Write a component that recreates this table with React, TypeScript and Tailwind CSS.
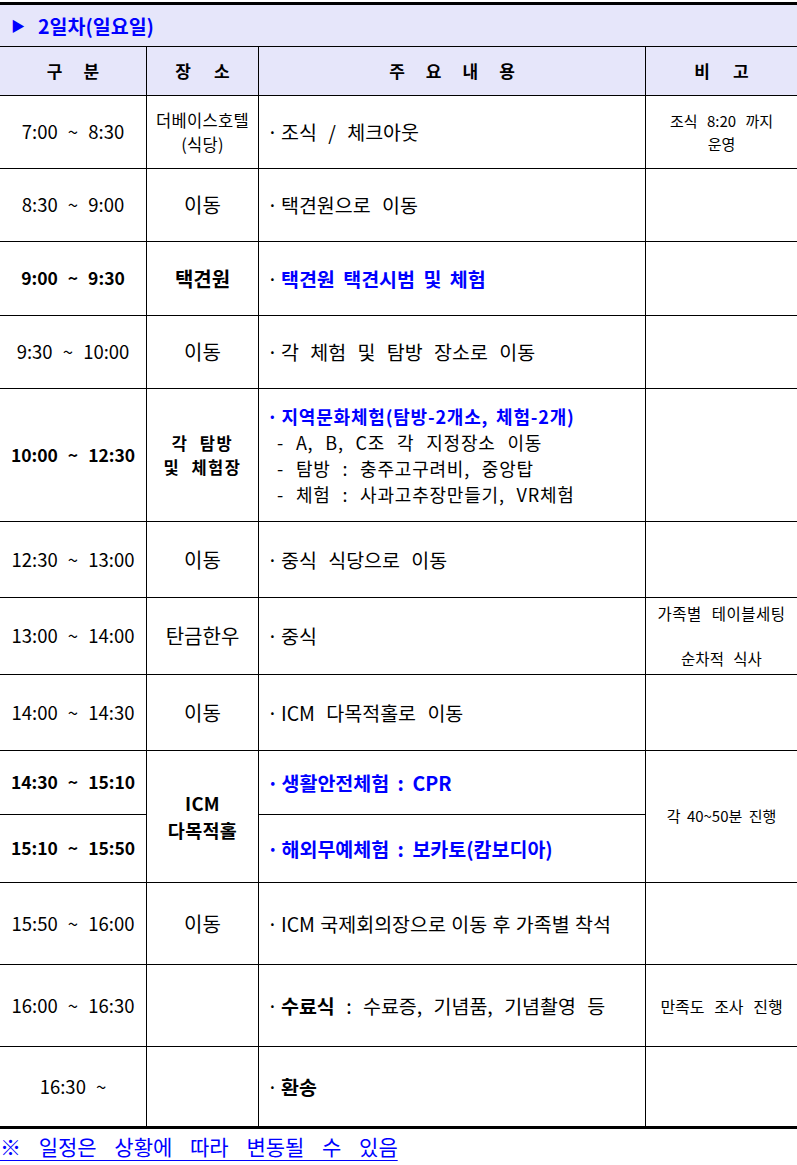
import React from 'react';

type Row = {
  time: string;
  timeBold?: boolean;
  place?: React.ReactNode;
  content: React.ReactNode;
  note?: React.ReactNode;
  noteSpan?: boolean;
  placeSpan?: boolean;
  skipPlace?: boolean;
  skipNote?: boolean;
};

const blue = 'text-[#0000ff]';

function Dot({ className = '' }: { className?: string }) {
  return <span className={`mr-[3px] ${className}`}>·</span>;
}

const rows: Row[] = [
  {
    time: '7:00 ~ 8:30',
    place: (
      <div className="text-[16.5px] leading-[24px] tracking-[0.3px]">
        <div>더베이스호텔</div>
        <div>(식당)</div>
      </div>
    ),
    content: <span><Dot />조식 / 체크아웃</span>,
    note: (
      <div className="text-[15px] leading-[23px]">
        <div>조식 8:20 까지</div>
        <div>운영</div>
      </div>
    ),
  },
  { time: '8:30 ~ 9:00', place: '이동', content: <span><Dot />택견원으로 이동</span> },
  {
    time: '9:00 ~ 9:30',
    timeBold: true,
    place: <span className="font-bold">택견원</span>,
    content: (
      <span>
        <Dot />
        <span className={`font-bold ${blue} [word-spacing:4px]`}>택견원 택견시범 및 체험</span>
      </span>
    ),
  },
  { time: '9:30 ~ 10:00', place: '이동', content: <span><Dot />각 체험 및 탐방 장소로 이동</span> },
  {
    time: '10:00 ~ 12:30',
    timeBold: true,
    place: (
      <div className="font-bold text-[16.5px] leading-[24px] tracking-[1.5px]">
        <div>각 탐방</div>
        <div>및 체험장</div>
      </div>
    ),
    content: (
      <div className="text-[18px] leading-[26px] tracking-[0.8px]">
        <div className={`font-bold ${blue} [word-spacing:3px]`}>
          <Dot />지역문화체험(탐방-2개소, 체험-2개)
        </div>
        <div className="pl-[10px]">- A, B, C조 각 지정장소 이동</div>
        <div className="pl-[10px]">- 탐방 : 충주고구려비, 중앙탑</div>
        <div className="pl-[10px]">- 체험 : 사과고추장만들기, VR체험</div>
      </div>
    ),
  },
  { time: '12:30 ~ 13:00', place: '이동', content: <span><Dot />중식 식당으로 이동</span> },
  {
    time: '13:00 ~ 14:00',
    place: '탄금한우',
    content: <span><Dot />중식</span>,
    note: (
      <div className="text-[15.5px] leading-[45px]">
        <div className="tracking-[0.5px]">가족별 테이블세팅</div>
        <div>순차적 식사</div>
      </div>
    ),
  },
  { time: '14:00 ~ 14:30', place: '이동', content: <span><Dot />ICM 다목적홀로 이동</span> },
  {
    time: '14:30 ~ 15:10',
    timeBold: true,
    placeSpan: true,
    place: (
      <div className="font-bold text-[18.5px] leading-[27px] tracking-[0.3px]">
        <div>ICM</div>
        <div>다목적홀</div>
      </div>
    ),
    content: (
      <span className={`font-bold ${blue} [word-spacing:4px]`}>
        <Dot />생활안전체험 : CPR
      </span>
    ),
    noteSpan: true,
    note: <span className="text-[15px] [word-spacing:3px]">각 40~50분 진행</span>,
  },
  {
    time: '15:10 ~ 15:50',
    timeBold: true,
    skipPlace: true,
    skipNote: true,
    content: (
      <span className={`font-bold ${blue} [word-spacing:4px]`}>
        <Dot />해외무예체험 : 보카토(캄보디아)
      </span>
    ),
  },
  {
    time: '15:50 ~ 16:00',
    place: '이동',
    content: <span className="[word-spacing:1px]"><Dot />ICM 국제회의장으로 이동 후 가족별 착석</span>,
  },
  {
    time: '16:00 ~ 16:30',
    place: '',
    content: (
      <span>
        <Dot />
        <span className="font-bold">수료식</span> : 수료증, 기념품, 기념촬영 등
      </span>
    ),
    note: <span className="text-[16px]">만족도 조사 진행</span>,
  },
  {
    time: '16:30 ~',
    place: '',
    content: (
      <span>
        <Dot />
        <span className="font-bold">환송</span>
      </span>
    ),
  },
];

function Spread({ chars, gap }: { chars: string[]; gap: string }) {
  return (
    <div className={`flex items-center justify-center ${gap}`}>
      {chars.map((c) => (
        <span key={c}>{c}</span>
      ))}
    </div>
  );
}

export default function App() {
  return (
    <div className="bg-white text-black text-[17px] [font-family:'Noto_Sans_CJK_KR','Noto_Sans',sans-serif] [word-spacing:6px]">
      <div className="mt-[2px] border-y-[3px] border-black bg-black grid grid-cols-[146px_111px_386px_151px] gap-px grid-rows-[41px_48px_72px_72px_73px_72px_132px_75px_76px_75px_63px_67px_81px_81px_79px]">
        <div className={`col-span-4 bg-[#e6e6fa] flex items-center pl-[11px] font-bold ${blue}`}>
          <span className="text-[14px] mr-[13px]">▶</span>
          <span className="text-[19.5px]">2일차(일요일)</span>
        </div>
        <div className="bg-[#e6e6fa] font-bold flex items-center justify-center">
          <Spread chars={['구', '분']} gap="gap-[21px]" />
        </div>
        <div className="bg-[#e6e6fa] font-bold flex items-center justify-center">
          <Spread chars={['장', '소']} gap="gap-[23px]" />
        </div>
        <div className="bg-[#e6e6fa] font-bold flex items-center justify-center">
          <Spread chars={['주', '요', '내', '용']} gap="gap-[21px]" />
        </div>
        <div className="bg-[#e6e6fa] font-bold flex items-center justify-center">
          <Spread chars={['비', '고']} gap="gap-[23px]" />
        </div>

        {rows.map((r) => (
          <React.Fragment key={r.time}>
            <div
              className={`bg-white flex items-center justify-center whitespace-pre ${
                r.timeBold ? 'font-bold text-[17.5px]' : 'text-[18.5px]'
              }`}
            >
              {r.time}
            </div>
            {!r.skipPlace && (
              <div
                className={`bg-white flex items-center justify-center text-center text-[20px] ${
                  r.placeSpan ? 'row-span-2' : ''
                }`}
              >
                {r.place}
              </div>
            )}
            <div className="bg-white flex items-center pl-[8px] text-[19.5px] [word-spacing:7px]">{r.content}</div>
            {!r.skipNote && (
              <div
                className={`bg-white flex items-center justify-center text-center ${
                  r.noteSpan ? 'row-span-2' : ''
                }`}
              >
                {r.note}
              </div>
            )}
          </React.Fragment>
        ))}
      </div>
      <div className="mt-[2px] leading-[30px] text-[21px] text-[#0000ff] [word-spacing:13px]">
        <span className="underline underline-offset-[5px] decoration-[1px]">※ 일정은 상황에 따라 변동될 수 있음</span>
      </div>
    </div>
  );
}
